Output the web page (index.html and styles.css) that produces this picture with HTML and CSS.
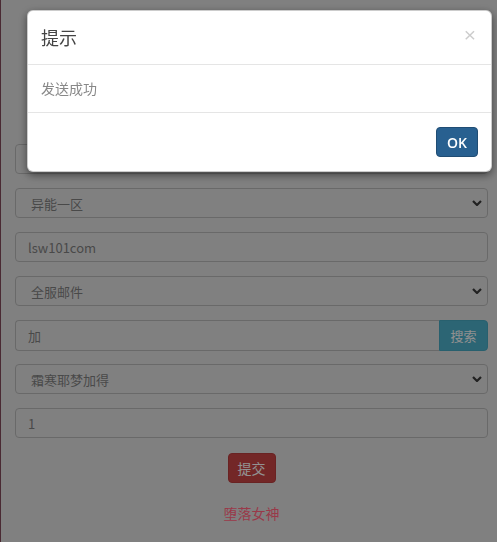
FILE: index.html
```html
<!DOCTYPE html>
<html lang="zh-CN">
<head>
<meta charset="utf-8">
<title>提示</title>
<link rel="stylesheet" href="styles.css">
</head>
<body>
<div class="page">
  <form class="mail-form">
    <input class="field" type="text" value="">
    <div class="select-wrap">
      <select class="field select"><option>异能一区</option></select>
      <svg class="chev" width="10" height="6" viewBox="0 0 10 6"><path d="M1 1 L5 5 L9 1" fill="none" stroke="#383838" stroke-width="2.2"/></svg>
    </div>
    <input class="field" type="text" value="lsw101com">
    <div class="select-wrap">
      <select class="field select"><option>全服邮件</option></select>
      <svg class="chev" width="10" height="6" viewBox="0 0 10 6"><path d="M1 1 L5 5 L9 1" fill="none" stroke="#383838" stroke-width="2.2"/></svg>
    </div>
    <div class="input-group">
      <input class="field group-input" type="text" value="加">
      <button class="btn btn-search" type="button">搜索</button>
    </div>
    <div class="select-wrap">
      <select class="field select"><option>霜寒耶梦加得</option></select>
      <svg class="chev" width="10" height="6" viewBox="0 0 10 6"><path d="M1 1 L5 5 L9 1" fill="none" stroke="#383838" stroke-width="2.2"/></svg>
    </div>
    <input class="field" type="text" value="1">
    <div class="submit-row">
      <button class="btn btn-danger" type="button">提交</button>
    </div>
    <p class="brand">堕落女神</p>
  </form>
</div>

<div class="backdrop"></div>
<div class="modal">
  <div class="modal-header">
    <h4 class="modal-title">提示</h4>
    <span class="close">×</span>
  </div>
  <div class="modal-body">发送成功</div>
  <div class="modal-footer">
    <button class="btn btn-primary" type="button">OK</button>
  </div>
</div>
</body>
</html>
```

FILE: styles.css
```css
html, body {
  margin: 0;
  padding: 0;
  height: 100%;
}
body {
  background: #d6d6d6;
  font-family: "Noto Sans CJK SC", "Liberation Sans", sans-serif;
  color: #777;
  border-left: 1px solid #7c4655;
  box-sizing: border-box;
  overflow: hidden;
}
.page {
  padding: 144px 9px 0 14px;
}
.mail-form {
  display: flex;
  flex-direction: column;
}
.field {
  box-sizing: border-box;
  width: 100%;
  height: 30px;
  margin: 0 0 14px 0;
  padding: 0 12px;
  border: 1px solid #b0b0b0;
  border-radius: 4px;
  background: transparent;
  font-family: "Noto Sans CJK SC", "Liberation Sans", sans-serif;
  font-size: 13px;
  color: #7a7a7a;
  outline: none;
}
.select-wrap {
  position: relative;
}
.select {
  appearance: none;
  -webkit-appearance: none;
  padding-left: 15px;
}
.chev {
  position: absolute;
  right: 6px;
  top: 12px;
  pointer-events: none;
}
.input-group {
  display: flex;
  height: 31px;
  margin-bottom: 13px;
}
.group-input {
  flex: 1;
  height: 31px;
  margin: 0;
  border-radius: 4px 0 0 4px;
  border-right: 0;
}
.btn {
  box-sizing: border-box;
  border: 1px solid transparent;
  border-radius: 4px;
  font-family: "Noto Sans CJK SC", "Liberation Sans", sans-serif;
  cursor: pointer;
  padding: 0;
}
.btn-search {
  width: 49px;
  height: 31px;
  border-radius: 0 4px 4px 0;
  background: #4aa9c2;
  border-color: #44a0b8;
  color: #f0f0f0;
  font-size: 13px;
}
.submit-row {
  display: flex;
  justify-content: center;
  margin-top: 1px;
}
.btn-danger {
  width: 48px;
  height: 30px;
  background: #c04242;
  border-color: #b03b3b;
  color: #f4f4f4;
  font-size: 14px;
}
.brand {
  margin: 20px 0 0 0;
  text-align: center;
  font-size: 14px;
  line-height: 20px;
  color: #ff607a;
}

.backdrop {
  position: fixed;
  inset: 0;
  background: rgba(0, 0, 0, 0.4);
  z-index: 10;
}
.modal {
  position: fixed;
  top: 10px;
  left: 27px;
  right: 5px;
  z-index: 20;
  background: #fff;
  border: 1px solid rgba(0, 0, 0, 0.2);
  border-radius: 6px;
  box-shadow: 0 3px 9px rgba(0, 0, 0, 0.5);
}
.modal-header {
  display: flex;
  justify-content: space-between;
  align-items: flex-start;
  padding: 13px 13px 14px 13px;
  border-bottom: 1px solid #e5e5e5;
}
.modal-title {
  margin: 0;
  font-size: 18px;
  line-height: 26px;
  font-weight: normal;
  color: #444;
}
.close {
  font-family: "Liberation Sans", sans-serif;
  font-size: 21px;
  line-height: 21px;
  font-weight: normal;
  color: #000;
  opacity: 0.2;
  margin-top: 0px;
  margin-right: 2px;
}
.modal-body {
  padding: 15px 13px;
  font-size: 14px;
  line-height: 17px;
  color: #888;
}
.modal-footer {
  display: flex;
  justify-content: flex-end;
  padding: 14px 13px;
  border-top: 1px solid #e5e5e5;
}
.btn-primary {
  width: 42px;
  height: 30px;
  background: #286090;
  border-color: #204d74;
  color: #fff;
  font-family: "Open Sans", "Liberation Sans", sans-serif;
  font-weight: 600;
  font-size: 14px;
}
```
